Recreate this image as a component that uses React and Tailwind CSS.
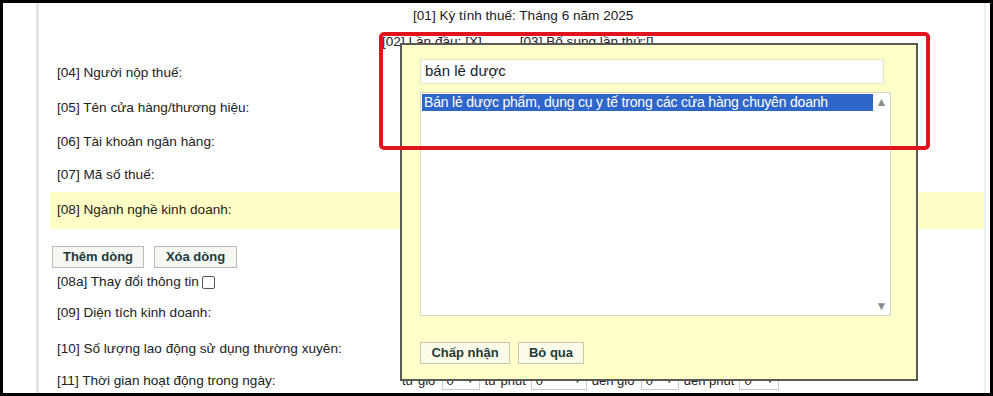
import React from "react";

const font = { fontFamily: '"Liberation Sans", Arial, sans-serif' };

function Row({ h, children, className = "" }) {
  return (
    <div className={`flex items-center shrink-0 ${h} ${className}`}>{children}</div>
  );
}

function TimeSelect({ w }) {
  return (
    <span className={`inline-flex items-center justify-between h-[18px] border border-[#c9c9c9] bg-white px-1 text-[13px] ${w}`}>
      <span>0</span>
      <span className="text-[9px] text-[#333]">▼</span>
    </span>
  );
}

export default function App() {
  return (
    <div
      className="relative w-[993px] h-[396px] overflow-hidden border-[3px] border-black bg-white text-[13.6px] text-[#222]"
      style={font}
    >
      {/* page body */}
      <div className="flex h-full">
        <div className="w-[33px] shrink-0" />
        <div className="flex flex-col w-[950px] h-full border-l-[3px] border-r-2 border-l-[#e1e5ea] border-r-[#eceff2]">
          <Row h="h-[26px]" className="pl-[374px]">
            [01] Kỳ tính thuế: Tháng 6 năm 2025
          </Row>
          <Row h="h-[26px]" className="pl-[343px] gap-[38px]">
            <span>[02] Lần đầu: [X]</span>
            <span>[03] Bổ sung lần thứ:[]</span>
          </Row>
          <Row h="h-[36px]" className="pl-[18px]">[04] Người nộp thuế:</Row>
          <Row h="h-[34px]" className="pl-[18px]">[05] Tên cửa hàng/thương hiệu:</Row>
          <Row h="h-[34px]" className="pl-[18px]">[06] Tài khoản ngân hàng:</Row>
          <Row h="h-[33px]" className="pl-[18px]">[07] Mã số thuế:</Row>
          <Row h="h-[37px]" className="ml-[11px] pl-[7px] bg-[#fdfdc6]">
            [08] Ngành nghề kinh doanh:
          </Row>
          <div className="h-[17px] shrink-0" />
          <div className="flex gap-[10px] pl-[13px] h-[22px] shrink-0">
            <button className="w-[92px] h-full border border-[#b9bdb9] bg-[#f6f7f3] text-[13px] font-bold text-[#1f3b3a]">
              Thêm dòng
            </button>
            <button className="w-[83px] h-full border border-[#b9bdb9] bg-[#f6f7f3] text-[13px] font-bold text-[#1f3b3a]">
              Xóa dòng
            </button>
          </div>
          <Row h="h-[28px]" className="pl-[18px] gap-[3px]">
            <span>[08a] Thay đổi thông tin</span>
            <span className="inline-block w-[13px] h-[13px] border border-[#555] rounded-[2px] bg-white" />
          </Row>
          <Row h="h-[34px]" className="pl-[18px]">[09] Diện tích kinh doanh:</Row>
          <Row h="h-[38px]" className="pl-[18px]">
            [10] Số lượng lao động sử dụng thường xuyên:
          </Row>
          <Row h="h-[26px]" className="pl-[18px]">
            <span className="w-[345px]">[11] Thời gian hoạt động trong ngày:</span>
            <span className="flex items-center gap-[5px] text-[13px]">
              <span>từ giờ</span>
              <TimeSelect w="w-[38px]" />
              <span>từ phút</span>
              <TimeSelect w="w-[56px]" />
              <span>đến giờ</span>
              <TimeSelect w="w-[38px]" />
              <span>đến phút</span>
              <TimeSelect w="w-[40px]" />
            </span>
          </Row>
        </div>
      </div>

      {/* popup dialog */}
      <div className="absolute left-[397px] top-[40px] w-[518px] h-[338px] border-2 border-[#5a5a55] bg-[#ffffc9]">
        <div className="flex flex-col pl-[18px] pt-[14px]">
          <div className="w-[464px] h-[25px] flex items-center pl-[4px] bg-white border border-[#e4e3c4] text-[15px]">
            bán lẻ dược
          </div>
          <div className="mt-[8px] w-[471px] h-[224px] flex bg-white border border-[#d8d8c8]">
            <div className="flex-1 pt-[1px] pl-[1px]">
              <div className="h-[17px] flex items-center pl-[2px] bg-[#2f66c9] text-white text-[14px] tracking-[-0.2px]">
                Bán lẻ dược phẩm, dụng cụ y tế trong các cửa hàng chuyên doanh
              </div>
            </div>
            <div className="w-[17px] flex flex-col items-center justify-between py-[3px] text-[12px] leading-none text-[#8a8a8a]">
              <span>▲</span>
              <span>▼</span>
            </div>
          </div>
          <div className="mt-[26px] flex gap-[8px] h-[22px]">
            <button className="w-[90px] h-full border border-[#c9c9ad] bg-[#fbfbe8] text-[13px] font-bold text-[#1f3b3a]">
              Chấp nhận
            </button>
            <button className="w-[66px] h-full border border-[#c9c9ad] bg-[#fbfbe8] text-[13px] font-bold text-[#1f3b3a]">
              Bỏ qua
            </button>
          </div>
        </div>
      </div>

      {/* red highlight */}
      <div className="absolute left-[376px] top-[29px] w-[551px] h-[118px] border-4 border-[#e1141e] rounded-[5px]" />
    </div>
  );
}
